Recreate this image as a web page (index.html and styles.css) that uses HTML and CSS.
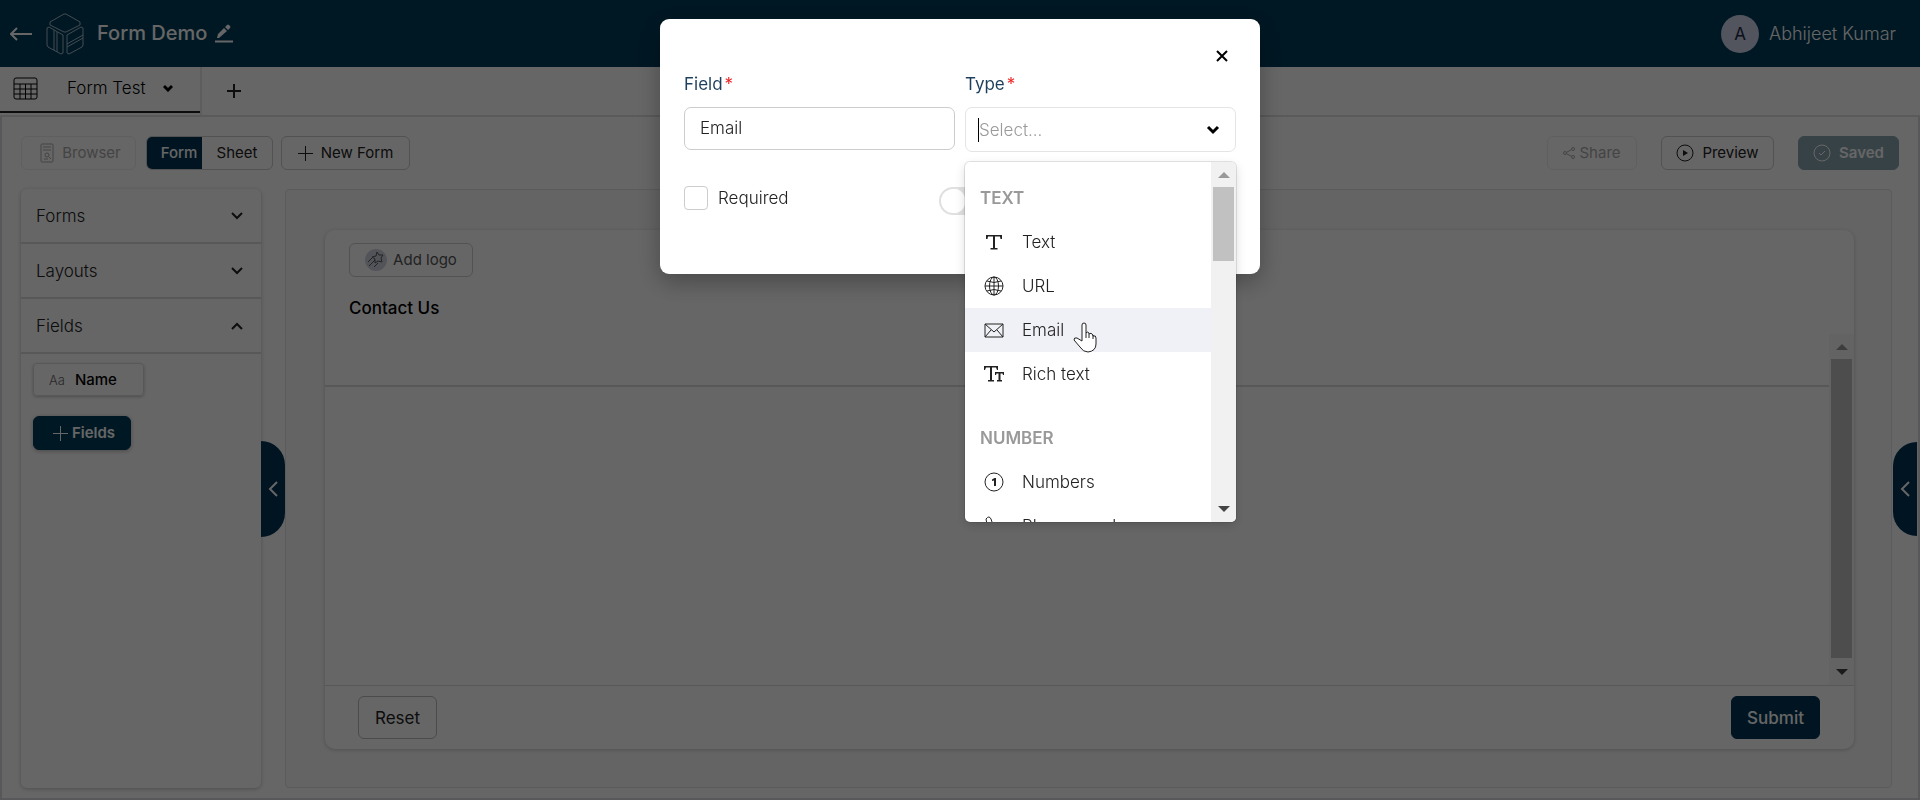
FILE: index.html
```html
<!DOCTYPE html>
<html lang="en">
<head>
<meta charset="utf-8">
<meta name="viewport" content="width=device-width, initial-scale=1">
<title>Form Demo</title>
<link rel="stylesheet" href="styles.css">
</head>
<body>
<header class="header">
  <a class="back" href="#" aria-label="Back"><svg width="22" height="14" viewBox="0 0 22 14"><path d="M7 1 1 7l6 6M1 7h21"/></svg></a>
  <svg class="logo" width="38" height="42" viewBox="0 0 38 42"><path d="M18 1h2l14 8v3L20 19h-2L4 12V9zM3 14l14 8v18l-2 1-13-7-1-2V15zM8 17v20M11 19v20M21 22l14-8 2 1v17l-1 2-13 7-2-1zM21 31l16-9M21 34l16-9"/></svg>
  <h1 class="title">Form Demo</h1>
  <button class="icon-button edit" aria-label="Rename"><svg width="18" height="19" viewBox="0 0 18 19"><path class="solid" d="M2 14 3 10 9 4l3 3-8 7zM10 3l2-2q1-1 2 0l1 1q1 1 0 2l-2 2z"/><path d="M0 17.500h18"/></svg></button>
  <div class="user"><span class="avatar">A</span><span>Abhijeet Kumar</span></div>
</header>

<nav class="tabs">
  <button class="tab">
    <svg width="25" height="23" viewBox="0 0 25 23"><rect x="1" y="1" width="23" height="21" rx="2"/><path d="M1 7h23M1 12h23M1 17h23M7 7v15M12.500 7v15M18 7v15"/></svg>
    <span class="tab-name">Form Test</span>
    <svg class="bold" width="10" height="8" viewBox="0 0 10 8"><path d="m1 2 4 4 4-4"/></svg>
  </button>
  <button class="icon-button add-tab" aria-label="Add tab"><svg width="14" height="14" viewBox="0 0 14 14"><path d="M7 0v14M0 7h14"/></svg></button>
</nav>

<div class="workspace">
  <div class="toolbar">
    <button class="button muted browser" disabled><svg width="14" height="20" viewBox="0 0 14 20"><rect x="1" y="1" width="12" height="18" rx="1"/><path d="M3 4h8M3 7h8"/><circle cx="7" cy="12" r="2"/><path d="m9 14 2 2M4 16h4"/></svg>Browser</button>
    <div class="segmented"><button class="segment active">Form</button><button class="segment">Sheet</button></div>
    <button class="button new-form"><svg width="15" height="15" viewBox="0 0 15 15"><path d="M7.500 0v15M0 7.500h15"/></svg>New Form</button>
    <div class="actions">
      <button class="button muted share" disabled><svg width="12" height="12" viewBox="0 0 12 12"><circle cx="2" cy="6" r="1.500"/><circle cx="10" cy="2" r="1.500"/><circle cx="10" cy="10" r="1.500"/><path d="m3.500 5.300 5-2.600M3.500 6.700l5 2.600"/></svg>Share</button>
      <button class="button preview"><svg width="18" height="18" viewBox="0 0 18 18"><circle cx="9" cy="9" r="8"/><path class="solid" d="m7 6 5 3-5 3z"/></svg>Preview</button>
      <button class="button saved"><svg width="18" height="18" viewBox="0 0 18 18"><circle cx="9" cy="9" r="8"/><path d="m6 9 2 2 4-4"/></svg>Saved</button>
    </div>
  </div>

  <div class="columns">
    <aside class="sidebar">
      <button class="section"><span>Forms</span><svg width="12" height="8" viewBox="0 0 12 8"><path d="m1 1 5 5 5-5"/></svg></button>
      <button class="section"><span>Layouts</span><svg width="12" height="8" viewBox="0 0 12 8"><path d="m1 1 5 5 5-5"/></svg></button>
      <button class="section"><span>Fields</span><svg width="12" height="8" viewBox="0 0 12 8"><path d="m1 7 5-5 5 5"/></svg></button>
      <div class="fields">
        <button class="field-chip"><span class="field-kind">Aa</span>Name</button>
        <button class="button primary add-field"><svg width="15" height="15" viewBox="0 0 15 15"><path d="M7.500 0v15M0 7.500h15"/></svg>Fields</button>
      </div>
      <button class="handle handle-left" aria-label="Collapse fields"><svg width="10" height="16" viewBox="0 0 10 16"><path d="M9 1 2 8l7 7"/></svg></button>
    </aside>

    <main class="canvas">
      <section class="form-card">
        <div class="form-head">
          <button class="button add-logo"><svg width="22" height="22" viewBox="0 0 22 22"><circle class="disc" cx="11" cy="11" r="11"/><path d="m12 3 2 3 4 0-2 3 1 4-4-1-3 2v-4L7 8l4-1zM3 13l4-4M4 17l6-6M9 18l4-4"/></svg>Add logo</button>
          <h2 class="form-title">Contact Us</h2>
        </div>
        <div class="form-body">
          <div class="form-content"><div class="form-intro"></div></div>
          <div class="scrollbar" aria-hidden="true"><i class="up"></i><i class="thumb"></i><i class="down"></i></div>
        </div>
        <footer class="form-foot"><button class="large-button">Reset</button><button class="large-button submit">Submit</button></footer>
      </section>
    </main>
  </div>
  <button class="handle handle-right" aria-label="Open settings"><svg width="10" height="16" viewBox="0 0 10 16"><path d="M9 1 2 8l7 7"/></svg></button>
</div>

<div class="backdrop">
  <form class="modal" role="dialog" aria-label="Add field">
    <button type="button" class="icon-button close" aria-label="Close"><svg width="12" height="12" viewBox="0 0 12 12"><path d="m1 1 10 10M11 1 1 11"/></svg></button>
    <div class="modal-grid">
      <div class="control">
        <label class="label" for="field-name">Field<span class="star">*</span></label>
        <input class="input" id="field-name" type="text" value="Email">
      </div>
      <div class="control">
        <label class="label" for="field-type">Type<span class="star">*</span></label>
        <div class="combo">
          <span class="caret"></span>
          <input class="combo-input" id="field-type" type="text" role="combobox" aria-expanded="true" aria-controls="type-menu" placeholder="Select...">
          <svg class="bold" width="14" height="10" viewBox="0 0 14 10"><path d="m2 2 5 5 5-5"/></svg>
          <div class="menu">
            <div class="options" id="type-menu" role="listbox">
              <div class="group">TEXT</div>
              <div class="option" role="option"><svg width="20" height="20" viewBox="0 0 20 20"><path class="solid" d="M2 3h16v4h-1.500L16 4.500h-5V16h2.500v1.500h-7V16H9V4.500H4L3.500 7H2z"/></svg>Text</div>
              <div class="option" role="option"><svg width="20" height="20" viewBox="0 0 20 20"><circle cx="10" cy="10" r="9"/><ellipse cx="10" cy="10" rx="4.500" ry="9"/><path d="M10 1v18M1 10h18M3 5q7 3 14 0M3 15q7-3 14 0"/></svg>URL</div>
              <div class="option hovered" role="option" aria-selected="true"><svg width="20" height="16" viewBox="0 0 20 16"><path d="M1 2h18v13H1zM1 2l9 8 9-8M1 15l6-7M19 15l-6-7"/></svg>Email
                <svg class="pointer" width="26" height="32" viewBox="0 0 26 32"><path d="M9 20V4q0-2 2-2t2 2v8q1-2 3 0v1q2-2 4 1v1q3-1 3 2v6q0 7-8 8-5 0-8-5l-6-7q0-3 3-2z"/><path d="M13 12v5M16 13v4M20 14v4"/></svg>
              </div>
              <div class="option" role="option"><svg width="20" height="20" viewBox="0 0 20 20"><path class="solid" d="M0 2h14v4h-1l-1-2.500H8V16h2v1.500H4V16h2V3.500H2L1 6H0zM11 8h9v3h-1l-.5-1.500h-2V16H18v1.500h-5V16h1.500V9.500h-2L12 11h-1z"/></svg>Rich text</div>
              <div class="group">NUMBER</div>
              <div class="option" role="option"><svg width="20" height="20" viewBox="0 0 20 20"><circle cx="10" cy="10" r="9"/><path class="solid" d="M8 7.500 10.500 6H12v8h-2V8.500L8 9z"/></svg>Numbers</div>
              <div class="option" role="option"><svg width="20" height="20" viewBox="0 0 20 20"><path d="M2 3q3-4 5 0l1 3-2 2q1 4 5 6l2-2q5 0 6 4l-3 3Q3 18 2 3z"/></svg>Phone number</div>
            </div>
            <div class="scrollbar menu-scrollbar" aria-hidden="true"><i class="up"></i><i class="thumb"></i><i class="down"></i></div>
          </div>
        </div>
      </div>
    </div>
    <div class="flags">
      <label class="check"><input class="checkbox" type="checkbox">Required</label>
      <input class="switch" type="checkbox" role="switch" aria-label="Unique">
    </div>
  </form>
</div>
</body>
</html>
```
FILE: styles.css
```css
* { box-sizing: border-box; }
body {
  margin: 0;
  min-height: 100vh;
  display: flex;
  flex-direction: column;
  background: #fff;
  color: #222;
  font: 300 17px/24px Inter, "Open Sans", sans-serif;
}
button, input { font: inherit; color: inherit; }
button { margin: 0; padding: 0; border: 0; background: none; }
svg { flex: none; fill: none; stroke: currentColor; stroke-width: 1; }
.solid { fill: currentColor; stroke: none; }
.bold { stroke-width: 3; }
.icon-button { display: flex; }

.header {
  display: flex;
  align-items: center;
  height: 67px;
  padding: 0 24px 0 10px;
  background: #003c5a;
  color: #fff;
}
.back { display: flex; margin-right: 14px; color: inherit; }
.back svg, .handle svg { stroke-width: 2; }
.logo { color: #a9bfce; }
.title { margin: 0 8px 2px 13px; font-size: 20px; font-weight: 500; }
.edit svg { stroke-width: 2; }
.user { display: flex; align-items: center; gap: 10px; margin-left: auto; font-size: 18px; font-weight: 300; }
.avatar {
  width: 38px;
  height: 38px;
  border-radius: 50%;
  background: #ccd2ea;
  color: #222b44;
  font-size: 17px;
  font-weight: 400;
  line-height: 38px;
  text-align: center;
}

.tabs { display: flex; height: 50px; border-bottom: 2px solid #e0e0e4; }
.tab {
  display: flex;
  align-items: center;
  width: 200px;
  height: 46px;
  padding: 0 14px 2px 13px;
  border-bottom: 2px solid #222;
  color: #000;
}
.tab-name { margin: 0 18px 0 29px; }
.add-tab { align-items: center; padding: 0 25px; border-left: 2px solid #e8e8ea; }
.add-tab svg { stroke-width: 2; }

.workspace {
  position: relative;
  flex: 1;
  display: flex;
  flex-direction: column;
  padding: 17px 19px 10px;
  border: 2px solid #dcdce0;
  border-top: 0;
}
.toolbar { display: flex; align-items: center; height: 38px; margin-bottom: 17px; }
.button {
  display: flex;
  align-items: center;
  justify-content: center;
  gap: 8px;
  height: 34px;
  border: 1px solid #ccc;
  border-radius: 6px;
  font-size: 15px;
  font-weight: 400;
}
.muted { border-color: #eee; color: #aaa; }
.browser { width: 115px; margin-right: 10px; padding-left: 4px; }
.segmented { display: flex; width: 127px; height: 34px; margin-right: 8px; border: 1px solid #ccc; border-radius: 6px; overflow: hidden; font-size: 15px; font-weight: 400; }
.segment { flex: 1; }
.active { flex: none; width: 55px; padding-left: 9px; background: #003554; color: #fff; font-weight: 500; }
.new-form { width: 129px; }
.actions { display: flex; gap: 24px; margin-left: auto; }
.share { width: 90px; gap: 4px; }
.preview { width: 113px; }
.saved { width: 101px; border-color: #8ba5b1; background: #8ba5b1; color: #fff; font-weight: 600; }

.columns { flex: 1; display: flex; gap: 24px; padding-right: 7px; }
.sidebar {
  position: relative;
  width: 240px;
  border-radius: 6px;
  box-shadow: 0 1px 4px rgba(0, 0, 0, .25);
}
.section {
  display: flex;
  align-items: center;
  justify-content: space-between;
  width: 100%;
  height: 55px;
  padding: 0 18px 0 15px;
  border-bottom: 2px solid #dcdcdc;
}
.section svg { stroke-width: 2; }
.fields { display: flex; flex-direction: column; align-items: flex-start; gap: 20px; padding: 9px 12px; }
.field-chip {
  display: flex;
  align-items: center;
  gap: 10px;
  width: 111px;
  height: 33px;
  padding-left: 15px;
  border: 1px solid #ddd;
  border-radius: 4px;
  box-shadow: 0 1px 3px rgba(0, 0, 0, .25);
  color: #000;
  font-size: 15px;
  font-weight: 500;
}
.field-kind { color: #666; font-size: 13px; font-weight: 300; }
.primary { border-color: #003c5a; background: #003c5a; color: #fff; font-weight: 600; }
.add-field { width: 98px; gap: 4px; padding-left: 4px; box-shadow: 0 1px 4px rgba(0, 0, 0, .3); }
.handle {
  position: absolute;
  top: 252px;
  left: 100%;
  display: flex;
  align-items: center;
  justify-content: center;
  width: 24px;
  height: 96px;
  border-radius: 0 24px 24px 0;
  background: #003554;
  color: #fff;
}
.handle-right { top: 325px; right: 1px; left: auto; height: 94px; border-radius: 24px 0 0 24px; }

.canvas {
  flex: 1;
  display: flex;
  padding: 40px 37px 38px 39px;
  border: 1px solid #e4e4e8;
  border-radius: 4px;
  background: #fafafa;
}
.form-card {
  flex: 1;
  display: flex;
  flex-direction: column;
  border-radius: 10px;
  background: #fff;
  box-shadow: 0 1px 4px rgba(0, 0, 0, .2);
}
.form-head { height: 104px; padding: 13px 24px; }
.add-logo { width: 124px; gap: 6px; color: #555; }
.disc { fill: #ccd2df; stroke: none; }
.form-title { margin: 19px 0 0; color: #000; font-size: 17px; font-weight: 500; }
.form-body { flex: 1; display: flex; }
.form-content { flex: 1; }
.form-intro { height: 53px; border-bottom: 2px solid #dcdcdc; }
.scrollbar { display: flex; flex-direction: column; align-items: center; width: 25px; padding: 10px 2px; background: #f8f8f8; }
.up { border: 6px solid transparent; border-top: 0; border-bottom-color: #999; }
.down { border: 6px solid transparent; border-bottom: 0; border-top-color: #444; }
.thumb { flex: 1; width: 21px; margin: 9px 0 11px; background: #c1c1c1; }
.form-foot { display: flex; justify-content: space-between; padding: 10px 34px 10px 33px; border-top: 1px solid #dcdcdc; }
.large-button { height: 43px; padding: 0 16px; border: 1px solid #bbb; border-radius: 6px; font-weight: 400; }
.submit { padding: 0 15px; border-color: #003554; background: #003554; color: #fff; font-weight: 500; }

.backdrop {
  position: fixed;
  inset: 0;
  display: flex;
  align-items: flex-start;
  justify-content: center;
  padding-top: 19px;
  background: rgba(0, 0, 0, .6);
}
.modal {
  width: 600px;
  height: 255px;
  padding: 31px 24px 24px;
  border-radius: 9px;
  background: #fff;
  box-shadow: 0 8px 24px rgba(0, 0, 0, .3);
}
.close { margin: 0 8px 10px auto; color: #000; }
.close svg { stroke-width: 2; }
.modal-grid { display: grid; grid-template-columns: repeat(2, minmax(0, 1fr)); align-items: start; gap: 10px; }
.label { display: block; margin-bottom: 11px; color: #1e3f5c; font-weight: 400; }
.star { margin-left: 2px; color: #e22; }
.input { display: block; width: 100%; height: 43px; padding: 0 15px 2px; border: 1px solid #ccc; border-radius: 7px; background: #fff; }
.combo {
  position: relative;
  display: flex;
  align-items: center;
  height: 45px;
  padding: 0 15px 0 12px;
  border: 1px solid #e4e4e4;
  border-radius: 7px;
}
.caret { width: 1px; height: 24px; background: #000; }
.combo-input { flex: 1; min-width: 0; padding: 0; border: 0; outline: 0; background: none; }
.combo-input::placeholder { color: #999; opacity: 1; }
.combo > svg { color: #000; }
.menu {
  position: absolute;
  top: 54px;
  right: -1px;
  left: -1px;
  display: flex;
  height: 360px;
  overflow: hidden;
  border-radius: 5px;
  background: #fff;
  box-shadow: 0 0 0 1px rgba(0, 0, 0, .1), 0 4px 11px rgba(0, 0, 0, .15);
}
.options { flex: 1; overflow: hidden; padding-top: 14px; }
.group { padding: 10px 15px; color: #999; font-weight: 600; }
.option { display: flex; align-items: center; gap: 18px; height: 44px; padding-left: 19px; }
.option + .group { margin-top: 20px; }
.hovered { position: relative; background: #f0f1f6; }
.pointer { position: absolute; top: 13px; left: 108px; fill: #fff; }
.menu-scrollbar { background: #f1f1f1; }
.menu-scrollbar .thumb { flex: none; height: 74px; margin-bottom: auto; }
.flags { display: flex; justify-content: space-between; padding: 34px 247px 0 0; }
.check { display: flex; align-items: center; gap: 10px; height: 24px; }
.checkbox { appearance: none; width: 24px; height: 24px; margin: 0; border: 1px solid #ccc; border-radius: 4px; background: #fff; }
.switch {
  appearance: none;
  width: 50px;
  height: 28px;
  margin: 1px 0 0;
  border: 2px solid #e0e0e0;
  border-radius: 14px;
  background: radial-gradient(circle at 12px 12px, #fff 12px, #e0e0e0 13px);
}
```
